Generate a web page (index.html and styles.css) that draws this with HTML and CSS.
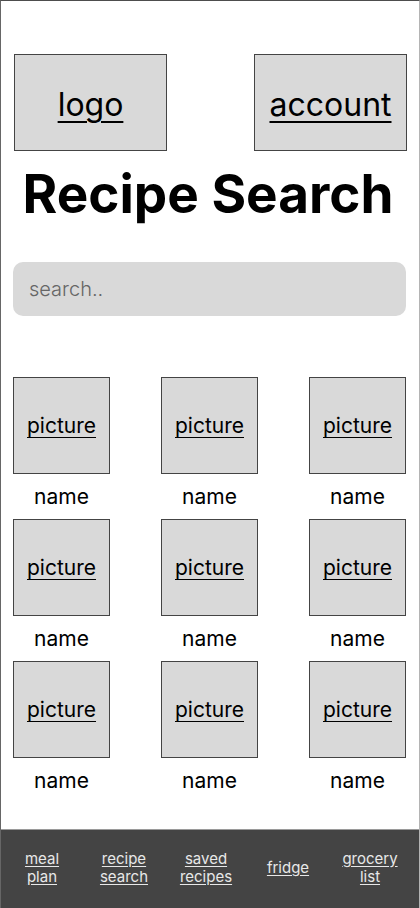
FILE: index.html
```html
<!DOCTYPE html>
<html lang="en">
<head>
<meta charset="utf-8">
<title>Recipe Search</title>
<link rel="stylesheet" href="styles.css">
</head>
<body>
<div class="phone">
  <header class="top">
    <div class="box"><a href="#">logo</a></div>
    <div class="box"><a href="#">account</a></div>
  </header>
  <h1 class="title">Recipe Search</h1>
  <div class="search">search..</div>
  <main class="grid">
    <div class="card"><div class="pic"><a href="#">picture</a></div><div class="name">name</div></div>
    <div class="card"><div class="pic"><a href="#">picture</a></div><div class="name">name</div></div>
    <div class="card"><div class="pic"><a href="#">picture</a></div><div class="name">name</div></div>
    <div class="card"><div class="pic"><a href="#">picture</a></div><div class="name">name</div></div>
    <div class="card"><div class="pic"><a href="#">picture</a></div><div class="name">name</div></div>
    <div class="card"><div class="pic"><a href="#">picture</a></div><div class="name">name</div></div>
    <div class="card"><div class="pic"><a href="#">picture</a></div><div class="name">name</div></div>
    <div class="card"><div class="pic"><a href="#">picture</a></div><div class="name">name</div></div>
    <div class="card"><div class="pic"><a href="#">picture</a></div><div class="name">name</div></div>
  </main>
  <nav class="nav">
    <a href="#">meal<br>plan</a>
    <a href="#">recipe<br>search</a>
    <a href="#">saved<br>recipes</a>
    <a href="#">fridge</a>
    <a href="#">grocery<br>list</a>
  </nav>
</div>
</body>
</html>
```

FILE: styles.css
```css
* { box-sizing: border-box; }
html, body { margin: 0; padding: 0; background: #fff; }
body { font-family: Inter, "Noto Sans", sans-serif; color: #000; }

.phone {
  width: 420px;
  height: 908px;
  border-top: 1px solid #4d4d4d;
  border-left: 1px solid #666;
  border-right: 1px solid #b4b4b4;
  display: flex;
  flex-direction: column;
  overflow: hidden;
}

.top {
  display: flex;
  justify-content: space-between;
  padding: 53px 12px 0 13px;
}
.box {
  width: 153px;
  height: 97px;
  background: #d9d9d9;
  border: 1px solid #444;
  display: flex;
  align-items: center;
  justify-content: center;
  padding-top: 4px;
}
.box a {
  color: #000;
  font-size: 32px;
  text-decoration-thickness: 2px;
  text-underline-offset: 5px;
}

.title {
  margin: 12px 0 0;
  font-size: 53px;
  line-height: 62px;
  font-weight: 700;
  text-align: center;
  padding-right: 4px;
}

.search {
  margin: 37px 13px 0 12px;
  height: 54px;
  background: #d9d9d9;
  border-radius: 10px;
  display: flex;
  align-items: center;
  padding-left: 16px;
  font-size: 20px;
  color: #666;
  font-weight: 300;
}

.grid {
  margin-top: 61px;
  padding: 0 13px 0 12px;
  display: grid;
  grid-template-columns: repeat(3, 97px);
  justify-content: space-between;
}
.card { display: flex; flex-direction: column; align-items: center; }
.pic {
  width: 97px;
  height: 97px;
  background: #d9d9d9;
  border: 1px solid #444;
  display: flex;
  align-items: center;
  justify-content: center;
}
.pic a {
  color: #000;
  font-size: 21px;
  text-decoration-thickness: 1px;
  text-underline-offset: 4px;
}
.name {
  height: 45px;
  line-height: 46px;
  font-size: 21px;
  text-align: center;
}

.nav {
  margin-top: auto;
  height: 79px;
  background: #444;
  border-top: 1px solid #9a9a9a;
  display: grid;
  grid-template-columns: repeat(5, 82px);
  align-items: center;
  justify-items: center;
  padding-bottom: 2px;
}
.nav a {
  color: #e8e8e8;
  font-size: 15px;
  line-height: 18px;
  text-align: center;
  text-underline-offset: 2px;
}
```
